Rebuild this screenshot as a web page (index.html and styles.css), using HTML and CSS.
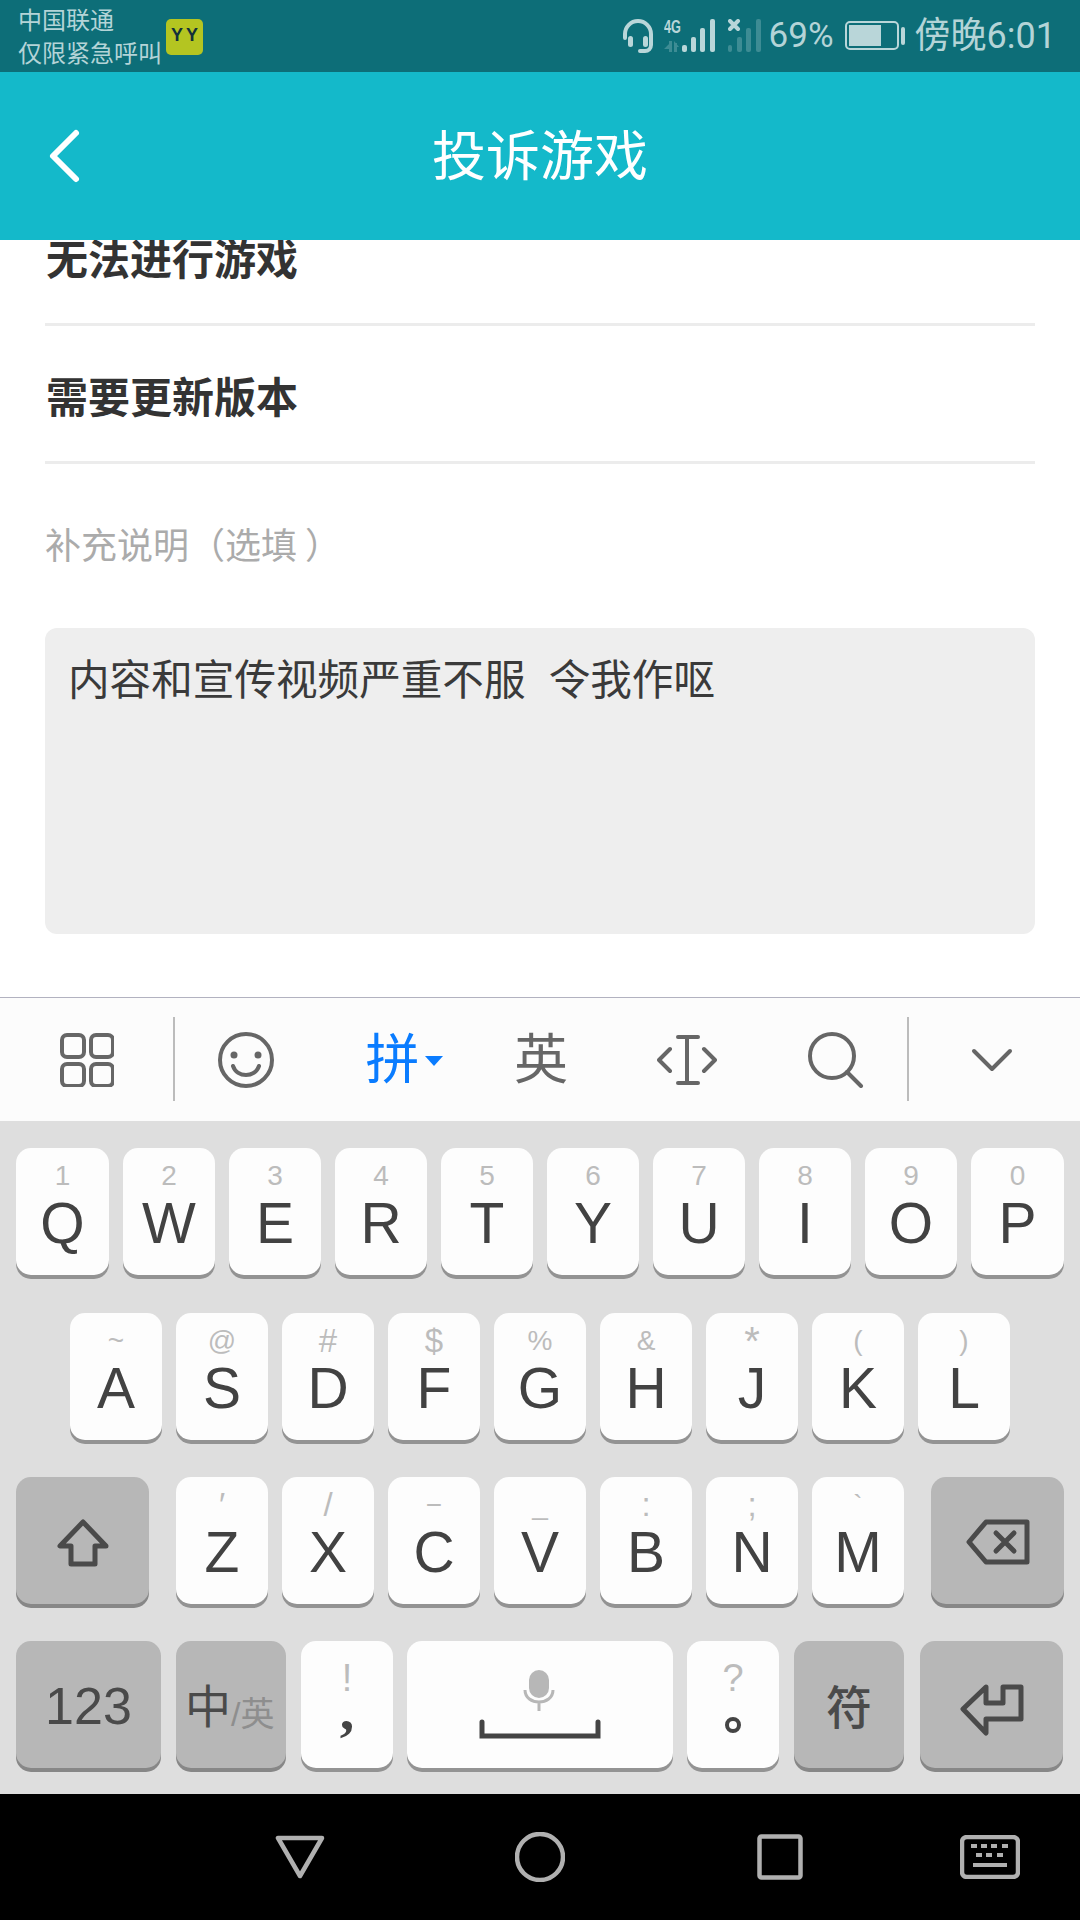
FILE: index.html
```html
<!DOCTYPE html>
<html lang="zh-CN">
<head>
<meta charset="utf-8">
<title>投诉游戏</title>
<link rel="stylesheet" href="styles.css">
</head>
<body>
<div class="phone">
  <header class="status">
    <div class="carrier"><span>中国联通</span><span>仅限紧急呼叫</span></div>
    <div class="yy">YY</div>
    <div class="status-right">
      <svg class="ico-headset" width="32" height="34" viewBox="0 0 32 34"><path class="st" d="M3 19V15a13 13 0 0 1 26 0v11a6 6 0 0 1-6 6h-5"/><rect class="sf" x="6" y="17" width="5" height="11" rx="2.500"/><rect class="sf" x="21" y="17" width="5" height="11" rx="2.500"/></svg>
      <svg class="ico-sig" width="52" height="34" viewBox="0 0 52 34"><text class="net" x="0" y="14" textLength="17" lengthAdjust="spacingAndGlyphs">4G</text><path class="dim" d="M5 22h3v11H5zM0 30l5-5v5zM10 22l5 6-5 0zM10 24h3v9h-3z"/><rect class="sf" x="18" y="26" width="5" height="7" rx="2"/><rect class="sf" x="27" y="18" width="5" height="15" rx="2"/><rect class="sf" x="36" y="9" width="5" height="24" rx="2"/><rect class="sf" x="46" y="0" width="5" height="33" rx="2"/></svg>
      <svg class="ico-sig2" width="34" height="34" viewBox="0 0 34 34"><path class="st" d="M2 2l8 8m0-8l-8 8"/><rect class="dim" x="0" y="26" width="4" height="7" rx="2"/><rect class="dim" x="9" y="18" width="5" height="15" rx="2"/><rect class="dim" x="18" y="9" width="5" height="24" rx="2"/><rect class="dim" x="28" y="0" width="5" height="33" rx="2"/></svg>
      <span class="pct">69%</span>
      <svg class="ico-bat" width="60" height="30" viewBox="0 0 60 30"><rect class="st-thin" x="1" y="1" width="52" height="27" rx="4"/><rect class="sf" x="4" y="4" width="32" height="21"/><rect class="sf" x="56" y="6" width="4" height="18" rx="2"/></svg>
      <span class="time">傍晚6:01</span>
    </div>
  </header>

  <div class="appbar">
    <svg class="back" width="36" height="56" viewBox="0 0 36 56"><path d="M30 5L7 28l23 23"/></svg>
    <h1 class="title">投诉游戏</h1>
    <span></span>
  </div>

  <main class="content">
    <ul class="list">
      <li class="item">无法进行游戏</li>
      <li class="item">需要更新版本</li>
    </ul>
    <p class="label">补充说明（选填<span class="paren">）</span></p>
    <div class="note">内容和宣传视频严重不服  令我作呕</div>
  </main>

  <section class="ime">
    <div class="toolbar">
      <div class="tool">
        <svg width="54" height="54" viewBox="0 0 54 54"><rect class="ti" x="2" y="2" width="22" height="22" rx="5"/><rect class="ti" x="31" y="2" width="22" height="22" rx="5"/><rect class="ti" x="2" y="31" width="22" height="22" rx="5"/><rect class="ti" x="31" y="31" width="22" height="22" rx="5"/></svg>
      </div>
      <div class="sep"></div>
      <div class="tool">
        <svg width="56" height="56" viewBox="0 0 56 56"><circle class="ti" cx="28" cy="28" r="26"/><circle class="tf" cx="16" cy="23" r="3.500"/><circle class="tf" cx="40" cy="23" r="3.500"/><path class="ti" d="M15 34c4 12 22 12 26 0"/></svg>
      </div>
      <div class="tool tool-pin"><span>拼</span><i class="caret"></i></div>
      <div class="tool tool-en">英</div>
      <div class="tool">
        <svg width="60" height="50" viewBox="0 0 60 50"><path class="ti" d="M13 14L2 25l11 11M47 14l11 11-11 11M21 2h20M21 48h20M30 2v46"/></svg>
      </div>
      <div class="tool tool-search">
        <svg width="56" height="56" viewBox="0 0 56 56"><circle class="ti" cx="24" cy="24" r="22"/><path class="ti" d="M39 40l14 14"/></svg>
      </div>
      <div class="sep"></div>
      <div class="tool tool-down">
        <svg width="42" height="24" viewBox="0 0 42 24"><path class="ti" d="M3 3l18 18L39 3"/></svg>
      </div>
    </div>

    <div class="keys">
      <div class="row">
        <div class="key w-edge"><span class="hint">1</span><span class="cap">Q</span></div>
        <div class="key"><span class="hint">2</span><span class="cap">W</span></div>
        <div class="key"><span class="hint">3</span><span class="cap">E</span></div>
        <div class="key"><span class="hint">4</span><span class="cap">R</span></div>
        <div class="key"><span class="hint">5</span><span class="cap">T</span></div>
        <div class="key"><span class="hint">6</span><span class="cap">Y</span></div>
        <div class="key"><span class="hint">7</span><span class="cap">U</span></div>
        <div class="key"><span class="hint">8</span><span class="cap">I</span></div>
        <div class="key"><span class="hint">9</span><span class="cap">O</span></div>
        <div class="key w-edge"><span class="hint">0</span><span class="cap">P</span></div>
      </div>
      <div class="row row-home">
        <div class="key"><span class="hint">~</span><span class="cap">A</span></div>
        <div class="key"><span class="hint">@</span><span class="cap">S</span></div>
        <div class="key"><span class="hint hint-lg">#</span><span class="cap">D</span></div>
        <div class="key"><span class="hint hint-lg">$</span><span class="cap">F</span></div>
        <div class="key"><span class="hint">%</span><span class="cap">G</span></div>
        <div class="key"><span class="hint">&amp;</span><span class="cap">H</span></div>
        <div class="key"><span class="hint hint-xl">*</span><span class="cap">J</span></div>
        <div class="key"><span class="hint">(</span><span class="cap">K</span></div>
        <div class="key"><span class="hint">)</span><span class="cap">L</span></div>
      </div>
      <div class="row">
        <div class="key fn w-shift">
          <svg width="52" height="48" viewBox="0 0 52 48"><path class="ki" d="M26 3L3 27h11v18h24V27h11z"/></svg>
        </div>
        <div class="key"><span class="hint hint-lg">′</span><span class="cap">Z</span></div>
        <div class="key"><span class="hint hint-lg">/</span><span class="cap">X</span></div>
        <div class="key"><span class="hint">−</span><span class="cap">C</span></div>
        <div class="key"><span class="hint">_</span><span class="cap">V</span></div>
        <div class="key"><span class="hint hint-lg">:</span><span class="cap">B</span></div>
        <div class="key"><span class="hint hint-lg">;</span><span class="cap">N</span></div>
        <div class="key"><span class="hint">`</span><span class="cap">M</span></div>
        <div class="key fn w-del">
          <svg width="64" height="46" viewBox="0 0 64 46"><path class="ki" d="M20 3h41v40H20L3 23z"/><path class="ki" d="M30 14l18 18m0-18L30 32"/></svg>
        </div>
      </div>
      <div class="row row-last">
        <div class="key fn w-123"><span class="fn-num">123</span></div>
        <div class="key fn w-zh"><span class="zh">中</span><span class="zh-sub">/英</span></div>
        <div class="key w-punct"><span class="p-hint">!</span><span class="p-comma">,</span></div>
        <div class="key w-space">
          <svg width="122" height="70" viewBox="0 0 122 70"><rect class="mic" x="50" y="0" width="20" height="28" rx="10"/><path class="mic-s" d="M46 20c0 16 28 16 28 0M60 33v8"/><path class="bar" d="M3 52v14h116V52"/></svg>
        </div>
        <div class="key w-q"><span class="p-hint">?</span><i class="ring"></i></div>
        <div class="key fn w-sym"><span class="sym">符</span></div>
        <div class="key fn w-enter">
          <svg width="64" height="52" viewBox="0 0 64 52"><path class="ki" d="M26 3L3 25l23 24V35h35V3H43v16H26z"/></svg>
        </div>
      </div>
    </div>
  </section>

  <nav class="nav">
    <div class="nav-cell"><svg width="50" height="44" viewBox="0 0 50 44"><path class="ni" d="M3 3h44L25 41z"/></svg></div>
    <div class="nav-cell"><svg width="50" height="50" viewBox="0 0 50 50"><circle class="ni" cx="25" cy="25" r="23"/></svg></div>
    <div class="nav-cell"><svg width="46" height="46" viewBox="0 0 46 46"><rect class="ni" x="2.500" y="2.500" width="41" height="41" rx="2"/></svg></div>
    <div class="nav-cell"><svg width="60" height="44" viewBox="0 0 60 44"><rect class="ni" x="2" y="2" width="56" height="40" rx="5"/><path class="ni-d" d="M11 11h6M21 11h6M31 11h6M42 11h6M16 20h6M26 20h6M37 20h6M13 30h34"/></svg></div>
  </nav>
</div>
</body>
</html>
```

FILE: styles.css
```css
* { box-sizing: border-box; }
html, body { margin: 0; padding: 0; }
body { font-family: "Liberation Sans", "Noto Sans CJK SC", sans-serif; background: #fff; }

.phone { width: 1080px; height: 1920px; display: flex; flex-direction: column; overflow: hidden; }

/* status bar */
.status { height: 72px; background: #0d6e78; display: flex; align-items: center; padding: 0 24px 0 18px; color: #b4d4d7; font-family: Roboto, "Noto Sans CJK SC", sans-serif; flex: none; }
.carrier { display: flex; flex-direction: column; font-size: 24px; line-height: 33px; margin-top: 3px; }
.yy { width: 37px; height: 36px; margin-left: 4px; margin-top: 1px; border-radius: 5px; background: #b4c521; color: #12303a; font-family: "Liberation Sans", sans-serif; font-size: 18px; font-weight: 700; display: flex; align-items: center; justify-content: center; letter-spacing: 3px; padding-left: 3px; padding-bottom: 3px; }
.status-right { margin-left: auto; display: flex; align-items: center; }
.sf { fill: #b9d6d9; }
.dim { fill: #3d8c94; }
.st { fill: none; stroke: #b9d6d9; stroke-width: 4; stroke-linecap: round; }
.st-thin { fill: none; stroke: #b9d6d9; stroke-width: 2; }
.net { fill: #b9d6d9; font-size: 19px; font-weight: 700; font-family: "Liberation Sans", sans-serif; }
.ico-headset { margin-right: 10px; }
.ico-sig { margin-right: 12px; }
.ico-sig2 { margin-right: 7px; }
.pct { font-size: 35px; line-height: 40px; margin-right: 11px; }
.ico-bat { margin-right: 10px; }
.time { font-size: 36px; line-height: 44px; }

/* app bar */
.appbar { height: 168px; flex: none; background: #14b9ca; display: grid; grid-template-columns: 1fr auto 1fr; align-items: center; padding-left: 46px; }
.back { fill: none; stroke: #fff; stroke-width: 6; stroke-linecap: round; stroke-linejoin: round; }
.title { margin: 2px 0 0 -46px; font-size: 54px; font-weight: 400; line-height: 60px; color: #fff; }

/* content */
.content { flex: 1; overflow: hidden; padding: 0 45px; background: #fff; }
.list { list-style: none; margin: -52px 0 0; padding: 0; }
.item { height: 138px; display: flex; align-items: flex-end; padding: 0 0 41px 1px; border-bottom: 3px solid #ececec; font-size: 42px; line-height: 42px; font-weight: 700; color: #333; }
.label { margin: 58px 0 0; font-size: 36px; line-height: 50px; color: #ababab; }
.paren { margin-left: 8px; }
.note { margin-top: 56px; height: 306px; padding: 23px 23px; background: #eee; border-radius: 12px; font-size: 41.600px; line-height: 60px; color: #3a3a3a; white-space: pre-wrap; }

/* input method */
.ime { flex: none; height: 797px; display: flex; flex-direction: column; }
.toolbar { height: 124px; flex: none; background: #fcfcfc; border-top: 1px solid #b2b2c0; display: grid; grid-template-columns: 173px 2px 141px 152px 146px 146px 147px 2px 1fr; align-items: center; }
.tool { display: flex; align-items: center; justify-content: center; }
.sep { width: 2px; height: 84px; background: #bcbcbc; margin-bottom: 2px; }
.ti { fill: none; stroke: #666; stroke-width: 4; stroke-linecap: round; stroke-linejoin: round; }
.tf { fill: #666; }
.tool-pin { font-size: 54px; line-height: 60px; color: #0a7cff; padding-left: 24px; }
.caret { width: 0; height: 0; border-left: 9px solid transparent; border-right: 9px solid transparent; border-top: 10px solid #0a7cff; margin-left: 5px; margin-top: 2px; }
.tool-en { font-size: 54px; line-height: 60px; color: #666; }
.tool-search { padding-left: 5px; }
.tool-down { padding-right: 5px; }

.keys { flex: 1; background: #dedede; padding-top: 27px; display: flex; flex-direction: column; gap: 37.500px; }
.row { display: flex; gap: 14px; padding-left: 16px; }
.row-home { padding-left: 70px; }
.row-last { margin-top: -1px; }
.key { width: 92px; height: 127px; border-radius: 15px; background: #fdfdfd; box-shadow: 0 4px 0 #939393; display: flex; flex-direction: column; align-items: center; padding-top: 12px; flex: none; }
.w-edge { width: 93px; }
.hint { font-size: 28px; line-height: 32px; color: #bcbcbc; }
.hint-lg { font-size: 33px; }
.hint-xl { font-size: 40px; }
.cap { font-size: 57px; line-height: 62px; color: #424242; }
.fn { background: #b7b7b7; box-shadow: 0 4px 0 #878787; justify-content: center; padding-top: 4px; }
.ki { fill: none; stroke: #4a4a4a; stroke-width: 5; stroke-linejoin: round; stroke-linecap: round; }
.w-shift { width: 133px; margin-right: 13px; }
.w-del { width: 133px; margin-left: 13px; padding-top: 2px; }
.w-123 { width: 145px; padding-top: 3px; }
.fn-num { font-size: 52px; line-height: 60px; color: #4a4a4a; }
.w-zh { width: 110px; margin-left: 1px; flex-direction: row; align-items: flex-start; justify-content: flex-start; padding: 40px 0 0 9px; }
.zh { font-size: 46px; line-height: 52px; color: #4a4a4a; }
.zh-sub { font-size: 34px; line-height: 40px; color: #8e8e8e; margin-top: 13px; }
.w-punct { margin-left: 1px; }
.p-hint { font-size: 38px; line-height: 34px; color: #bcbcbc; margin-top: 8px; }
.p-comma { font-family: "Liberation Serif", serif; font-weight: 700; font-size: 58px; line-height: 30px; color: #444; }
.w-space { width: 266px; justify-content: flex-start; padding-top: 29px; }
.mic { fill: #b7b7b7; }
.mic-s { fill: none; stroke: #b7b7b7; stroke-width: 3; }
.bar { fill: none; stroke: #444; stroke-width: 5; stroke-linecap: round; }
.ring { width: 16px; height: 16px; border: 4px solid #444; border-radius: 50%; margin-top: 22px; }
.w-sym { width: 110px; margin-left: 1px; padding-top: 7px; }
.sym { font-size: 46px; line-height: 52px; color: #4a4a4a; font-weight: 500; }
.w-enter { width: 143px; margin-left: 2px; padding-top: 12px; }

/* navigation bar */
.nav { height: 126px; flex: none; background: #000; display: grid; grid-template-columns: 240px 240px 240px 180px; padding-left: 180px; align-items: center; }
.nav-cell { display: flex; justify-content: center; align-items: center; }
.ni { fill: none; stroke: #b0b0b0; stroke-width: 4.500; stroke-linejoin: round; }
.ni-d { fill: none; stroke: #b0b0b0; stroke-width: 4; }
```
